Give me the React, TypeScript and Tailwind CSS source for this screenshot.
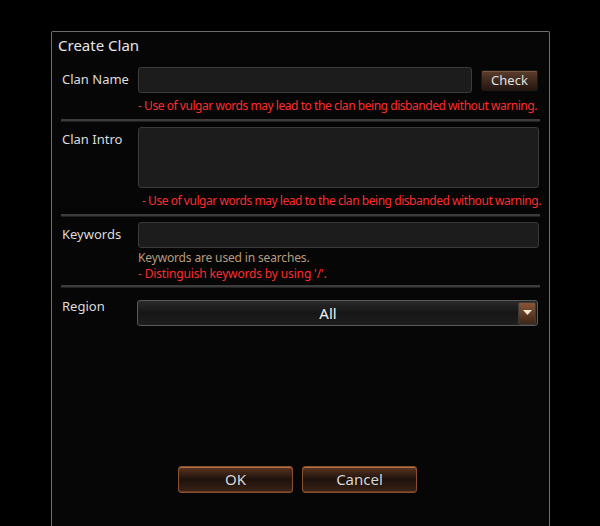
import React from 'react';

const font = { fontFamily: '"Noto Sans", "Liberation Sans", sans-serif' };

function Separator() {
  return <div className="mx-[9px] h-[3px] bg-[#3c3c3c] border-b border-[#202020]" />;
}

function GameButton({ label }: { label: string }) {
  return (
    <button className="w-[115px] h-[27px] rounded-[3px] border border-[#8a4f2e] bg-gradient-to-b from-[#5b3522] via-[#1e120c] to-[#3a2216] text-[15px] text-[#d6d6d6] shadow-[inset_0_1px_0_#b0703f,inset_0_-1px_0_#6a3c24]">
      {label}
    </button>
  );
}

export default function App() {
  return (
    <div className="w-[600px] h-[526px] bg-black overflow-hidden pt-[31px] pl-[51px]" style={font}>
      <div className="w-[499px] h-[500px] border border-b-0 border-[#6e6e6e] rounded-t-[2px] bg-[#060606] flex flex-col">
        {/* Title */}
        <div className="h-[26px] pl-[6px] pt-[2px] text-[15px] leading-[22px] text-[#e6e6e6]">Create Clan</div>

        {/* Clan Name */}
        <div className="flex pt-[9px] pl-[10px]">
          <div className="w-[76px] pt-[4px] text-[13px] leading-[16px] text-[#dcdcdc]">Clan Name</div>
          <div>
            <div className="flex items-center gap-[9px]">
              <div className="w-[334px] h-[26px] rounded-[3px] border border-[#3a3a3a] bg-[#1c1c1c]" />
              <button className="w-[57px] h-[21px] rounded-[2px] border border-[#1a1a1a] bg-gradient-to-b from-[#5e3e2c] to-[#24160f] text-[13px] leading-[18px] text-[#e0e0e0] shadow-[inset_0_1px_0_#7a5540]">
                Check
              </button>
            </div>
            <div className="mt-[5px] text-[12px] leading-[16px] tracking-[-0.45px] text-[#ff2c2c]">
              - Use of vulgar words may lead to the clan being disbanded without warning.
            </div>
          </div>
        </div>
        <div className="mt-[5px]">
          <Separator />
        </div>

        {/* Clan Intro */}
        <div className="flex pt-[5px] pl-[10px]">
          <div className="w-[76px] pt-[4px] text-[13px] leading-[16px] text-[#dcdcdc]">Clan Intro</div>
          <div>
            <div className="w-[401px] h-[61px] rounded-[3px] border border-[#3a3a3a] bg-[#1c1c1c]" />
            <div className="mt-[5px] pl-[4px] text-[12px] leading-[16px] tracking-[-0.45px] text-[#ff2c2c]">
              - Use of vulgar words may lead to the clan being disbanded without warning.
            </div>
          </div>
        </div>
        <div className="mt-[5px]">
          <Separator />
        </div>

        {/* Keywords */}
        <div className="flex pt-[5px] pl-[10px]">
          <div className="w-[76px] pt-[4px] text-[13px] leading-[16px] text-[#dcdcdc]">Keywords</div>
          <div>
            <div className="w-[401px] h-[26px] rounded-[3px] border border-[#3a3a3a] bg-[#1c1c1c]" />
            <div className="mt-[2px] text-[12px] leading-[16px] tracking-[-0.15px] text-[#b89c7c]">
              Keywords are used in searches.
            </div>
            <div className="text-[12px] leading-[16px] tracking-[-0.15px] text-[#ff2c2c]">
              - Distinguish keywords by using '/'.
            </div>
          </div>
        </div>
        <div className="mt-[3px]">
          <Separator />
        </div>

        {/* Region */}
        <div className="flex pt-[12px] pl-[10px]">
          <div className="w-[75px] mt-[-2px] text-[13px] leading-[16px] text-[#dcdcdc]">Region</div>
          <div className="w-[401px] h-[26px] rounded-[3px] border border-[#5a5a5a] bg-gradient-to-b from-[#2a2a2a] via-[#161616] to-[#1e1e1e] flex items-center">
            <div className="flex-1 text-center text-[15px] text-[#f0f0f0]">All</div>
            <div className="w-[18px] h-[23px] mr-[1px] rounded-[2px] border border-[#3a3a3a] bg-gradient-to-b from-[#8a5634] to-[#3e2618] flex items-center justify-center">
              <svg width="9" height="6" viewBox="0 0 9 6">
                <path d="M0 0h9L4.5 5z" fill="#f4e4d8" />
              </svg>
            </div>
          </div>
        </div>

        <div className="flex-1" />

        {/* Buttons */}
        <div className="flex justify-center gap-[9px] pr-[6px] pb-[38px]">
          <GameButton label="OK" />
          <GameButton label="Cancel" />
        </div>
      </div>
    </div>
  );
}
